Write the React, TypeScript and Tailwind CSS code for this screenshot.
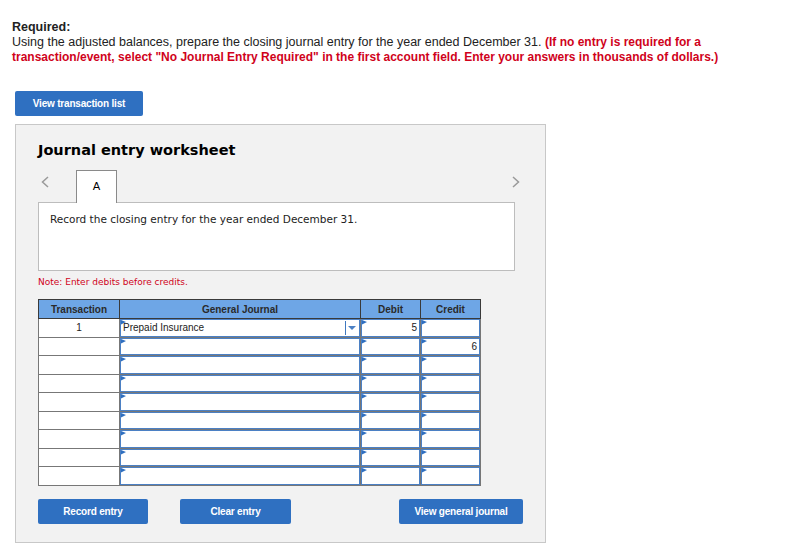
import React from 'react';

const rows = [
  { tx: '1', account: 'Prepaid Insurance', debit: '5', credit: '', select: true },
  { tx: '', account: '', debit: '', credit: '6' },
  { tx: '', account: '', debit: '', credit: '' },
  { tx: '', account: '', debit: '', credit: '' },
  { tx: '', account: '', debit: '', credit: '' },
  { tx: '', account: '', debit: '', credit: '' },
  { tx: '', account: '', debit: '', credit: '' },
  { tx: '', account: '', debit: '', credit: '' },
  { tx: '', account: '', debit: '', credit: '' },
];

function Flag() {
  return (
    <svg width="6" height="5" viewBox="0 0 6 5" className="absolute left-0 top-0">
      <polygon points="0,0 5,2 0,4.5" fill="#2f6fc0" />
    </svg>
  );
}

function InputCell({ value, align = 'left', select = false }: { value: string; align?: 'left' | 'right'; select?: boolean }) {
  return (
    <div className="relative h-full border border-[#4b80c4] bg-white">
      <Flag />
      <div
        className={`flex h-full items-center px-[2px] text-[10px] text-[#222] ${align === 'right' ? 'justify-end' : 'justify-start'}`}
        style={{ fontFamily: '"Liberation Sans", Arial, sans-serif' }}
      >
        {value}
      </div>
      {select && (
        <div className="absolute right-0 top-0 flex h-full w-[14px] items-center justify-center">
          <div className="absolute left-0 top-[1px] h-[14px] w-px bg-[#3f78c0]" />
          <svg width="8" height="4" viewBox="0 0 8 4">
            <polygon points="0,0 8,0 4,4" fill="#4b80c4" />
          </svg>
        </div>
      )}
    </div>
  );
}

function BlueButton({ label, className = '' }: { label: string; className?: string }) {
  return (
    <button
      className={`block h-[25px] rounded-[2px] bg-[#2f70c1] text-[10px] font-bold tracking-[-0.2px] text-white ${className}`}
      style={{ fontFamily: '"Liberation Sans", Arial, sans-serif' }}
    >
      {label}
    </button>
  );
}

export default function App() {
  const verdana = { fontFamily: '"DejaVu Sans", Verdana, sans-serif' };
  return (
    <div className="min-h-[560px] bg-white pl-[12px] pt-[20px]" style={{ fontFamily: '"Liberation Sans", Arial, sans-serif' }}>
      <div className="text-[12.5px] leading-[15px] text-[#222]">
        <div className="font-bold">Required:</div>
        <div>
          Using the adjusted balances, prepare the closing journal entry for the year ended December 31.{' '}
          <span className="text-[12px] font-bold text-[#d0021b]">
            (If no entry is required for a
            <br />
            transaction/event, select "No Journal Entry Required" in the first account field. Enter your answers in thousands of dollars.)
          </span>
        </div>
      </div>

      <BlueButton label="View transaction list" className="ml-[3px] mt-[26px] w-[128px]" />

      <div className="ml-[3px] mt-[8px] w-[531px] border border-[#c8c8c8] bg-[#f2f2f2] pb-[18px] pl-[22px] pt-[15px]">
        <h2 className="text-[14.5px] font-bold leading-[20px] text-black" style={verdana}>
          Journal entry worksheet
        </h2>

        <div className="mt-[10px] flex w-[476px] items-end justify-between">
          <div className="flex items-end">
            <svg width="8" height="12" viewBox="0 0 8 12" className="mb-[14px] ml-[3px]">
              <polyline points="7,1 1.5,6 7,11" fill="none" stroke="#9a9a9a" strokeWidth="1.5" />
            </svg>
            <div
              className="relative z-10 -mb-px ml-[27px] flex h-[33px] w-[41px] items-center justify-center border border-b-0 border-[#8a8a8a] bg-white text-[11px] text-black"
              style={verdana}
            >
              A
            </div>
          </div>
          <svg width="8" height="12" viewBox="0 0 8 12" className="mb-[14px] mr-[-6px]">
            <polyline points="1,1 6.5,6 1,11" fill="none" stroke="#9a9a9a" strokeWidth="1.5" />
          </svg>
        </div>

        <div className="h-[69px] w-[477px] border border-[#bdbdbd] bg-white px-[11px] pt-[9px] text-[10.5px] text-[#222]" style={verdana}>
          Record the closing entry for the year ended December 31.
        </div>

        <div className="mt-[6px] text-[9px] leading-[11px] text-[#d0021b]" style={verdana}>
          Note: Enter debits before credits.
        </div>

        <table className="mt-[11px] border-collapse" style={{ fontFamily: '"Liberation Sans", Arial, sans-serif' }}>
          <thead>
            <tr className="h-[19px] bg-[#6ea6e6] text-[10px] font-bold text-[#2a2a2a]">
              <th className="w-[81px] border border-[#3a3a3a] p-0 font-bold">Transaction</th>
              <th className="w-[241px] border border-[#3a3a3a] p-0 font-bold">General Journal</th>
              <th className="w-[60px] border border-[#3a3a3a] p-0 font-bold">Debit</th>
              <th className="w-[60px] border border-[#3a3a3a] p-0 font-bold">Credit</th>
            </tr>
          </thead>
          <tbody>
            {rows.map((r, i) => (
              <tr key={i} className="h-[18.5px]">
                <td className="border border-[#777] bg-white p-0 text-center text-[10px] text-[#222]">{r.tx}</td>
                <td className="h-[18.5px] border border-[#777] p-0">
                  <InputCell value={r.account} select={r.select} />
                </td>
                <td className="h-[18.5px] border border-[#777] p-0">
                  <InputCell value={r.debit} align="right" />
                </td>
                <td className="h-[18.5px] border border-[#777] p-0">
                  <InputCell value={r.credit} align="right" />
                </td>
              </tr>
            ))}
          </tbody>
        </table>

        <div className="mt-[13px] flex">
          <BlueButton label="Record entry" className="w-[110px]" />
          <BlueButton label="Clear entry" className="ml-[32px] w-[111px]" />
          <BlueButton label="View general journal" className="ml-[108px] w-[124px]" />
        </div>
      </div>
    </div>
  );
}
